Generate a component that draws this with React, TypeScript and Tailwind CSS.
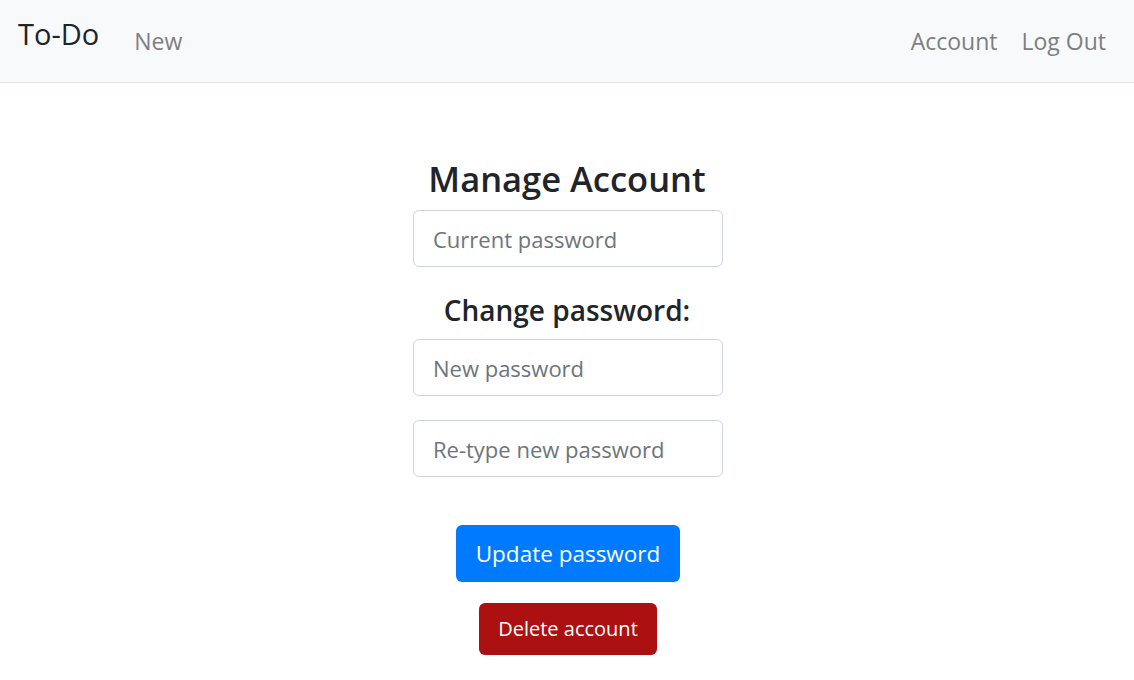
export default function App() {
  const font = { fontFamily: '"Open Sans", "Noto Sans", sans-serif' }
  return (
    <div className="min-h-screen bg-white text-[#212529]" style={font}>
      {/* Navbar */}
      <nav className="h-[83px] bg-[#f8f9fa] border-b border-[#dfe1e4] flex items-start px-[18px]">
        <a className="mt-[14px] text-[29px] leading-[40px] text-[#212529]">To-Do</a>
        <a className="ml-[35px] mt-[25px] text-[23px] leading-[32px] text-[#7c7f83]">New</a>
        <div className="ml-auto mt-[25px] flex gap-[24px] pr-[10px] text-[23px] leading-[32px] text-[#7c7f83]">
          <a>Account</a>
          <a>Log Out</a>
        </div>
      </nav>

      {/* Content */}
      <div className="flex flex-col items-center">
        <h1 className="mt-[72px] text-[34.5px] leading-[48px] font-semibold">Manage Account</h1>
        <input
          className="mt-[7px] ml-[2px] w-[310px] h-[57px] px-[19px] text-[22px] border border-[#ced4da] rounded-[6px] placeholder:text-[#6c757d] outline-none"
          placeholder="Current password"
          type="password"
        />
        <h2 className="mt-[24px] text-[28px] leading-[38px] font-semibold">Change password:</h2>
        <input
          className="mt-[10px] ml-[2px] w-[310px] h-[57px] px-[19px] text-[22px] border border-[#ced4da] rounded-[6px] placeholder:text-[#6c757d] outline-none"
          placeholder="New password"
          type="password"
        />
        <input
          className="mt-[24px] ml-[2px] w-[310px] h-[57px] px-[19px] text-[22px] border border-[#ced4da] rounded-[6px] placeholder:text-[#6c757d] outline-none"
          placeholder="Re-type new password"
          type="password"
        />
        <button className="mt-[48px] ml-[2px] h-[57px] px-[20px] bg-[#007bff] text-white text-[22.5px] rounded-[6px]">
          Update password
        </button>
        <button className="mt-[21px] ml-[2px] h-[52px] px-[19px] bg-[#ac1010] text-white text-[20px] rounded-[6px]">
          Delete account
        </button>
      </div>
    </div>
  )
}
